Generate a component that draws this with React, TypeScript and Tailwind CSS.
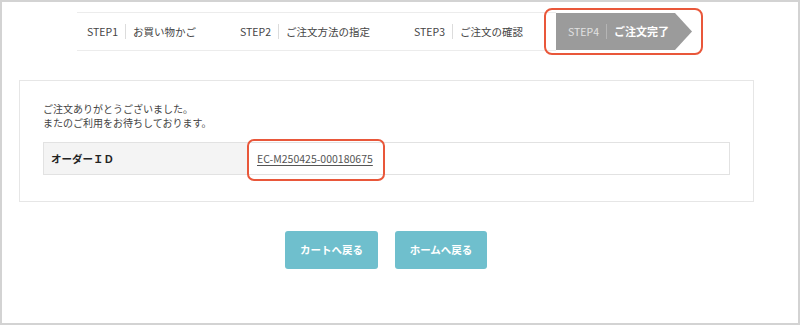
export default function App() {
  const steps = [
    { no: "STEP1", label: "お買い物かご", w: "w-[153px]" },
    { no: "STEP2", label: "ご注文方法の指定", w: "w-[174px]" },
    { no: "STEP3", label: "ご注文の確認", w: "w-[152px]" },
  ];

  return (
    <div
      className="w-[800px] h-[325px] border-2 border-[#d3d3d3] bg-white text-[#333]"
      style={{ fontFamily: '"Noto Sans CJK JP", "Noto Sans", sans-serif' }}
    >
      {/* step bar */}
      <div className="flex ml-[75px] mt-[10px] h-[39px]">
        {steps.map((s) => (
          <div
            key={s.no}
            className={`${s.w} flex items-center pl-[10px] border-y border-[#ececec] text-[10.5px] text-[#444]`}
          >
            <span>{s.no}</span>
            <span className="mx-[7px] h-[15px] w-px bg-[#dcdcdc]" />
            <span>{s.label}</span>
          </div>
        ))}
        <div className="relative mt-px h-[37px] w-[136px]">
          <div className="flex h-full items-center pl-[12px] bg-[#9b9b9b] [clip-path:polygon(0_0,calc(100%-17px)_0,100%_50%,calc(100%-17px)_100%,0_100%)]">
            <span className="text-[10.5px] text-[#e2e2e2]">STEP4</span>
            <span className="mx-[7px] h-[15px] w-px bg-[#b5b5b5]" />
            <span className="text-[11px] font-bold text-white">ご注文完了</span>
          </div>
          <div className="absolute -left-[12px] -top-[5px] -right-[11px] -bottom-[5px] rounded-[8px] border-2 border-[#e9573a]" />
        </div>
      </div>

      {/* message card */}
      <div className="ml-[17px] mt-[29px] w-[735px] h-[122px] border border-[#e6e6e6] pl-[23px] pt-[21px]">
        <p className="text-[10px] leading-[14px] text-[#444]">ご注文ありがとうございました。</p>
        <p className="text-[10px] leading-[14px] text-[#444]">またのご利用をお待ちしております。</p>
        <div className="mt-[12px] flex h-[33px] w-[687px] border border-[#e2e2e2]">
          <div className="flex w-[204px] items-center bg-[#f4f4f4] pl-[7px] text-[10.5px] font-bold text-[#222]">
            オーダーＩＤ
          </div>
          <div className="relative flex flex-1 items-center pl-[9px]">
            <a className="text-[10.5px] text-[#555] underline underline-offset-2">EC-M250425-000180675</a>
            <div className="absolute -left-[1px] -top-[4px] w-[138px] -bottom-[7px] rounded-[7px] border-2 border-[#e9573a]" />
          </div>
        </div>
      </div>

      {/* buttons */}
      <div className="mt-[29px] flex gap-[17px] pl-[283px]">
        <button className="h-[38px] w-[93px] rounded-[3px] bg-[#6fbfcd] text-[10.5px] font-bold text-white">
          カートへ戻る
        </button>
        <button className="h-[38px] w-[92px] rounded-[3px] bg-[#6fbfcd] text-[10.5px] font-bold text-white">
          ホームへ戻る
        </button>
      </div>
    </div>
  );
}
